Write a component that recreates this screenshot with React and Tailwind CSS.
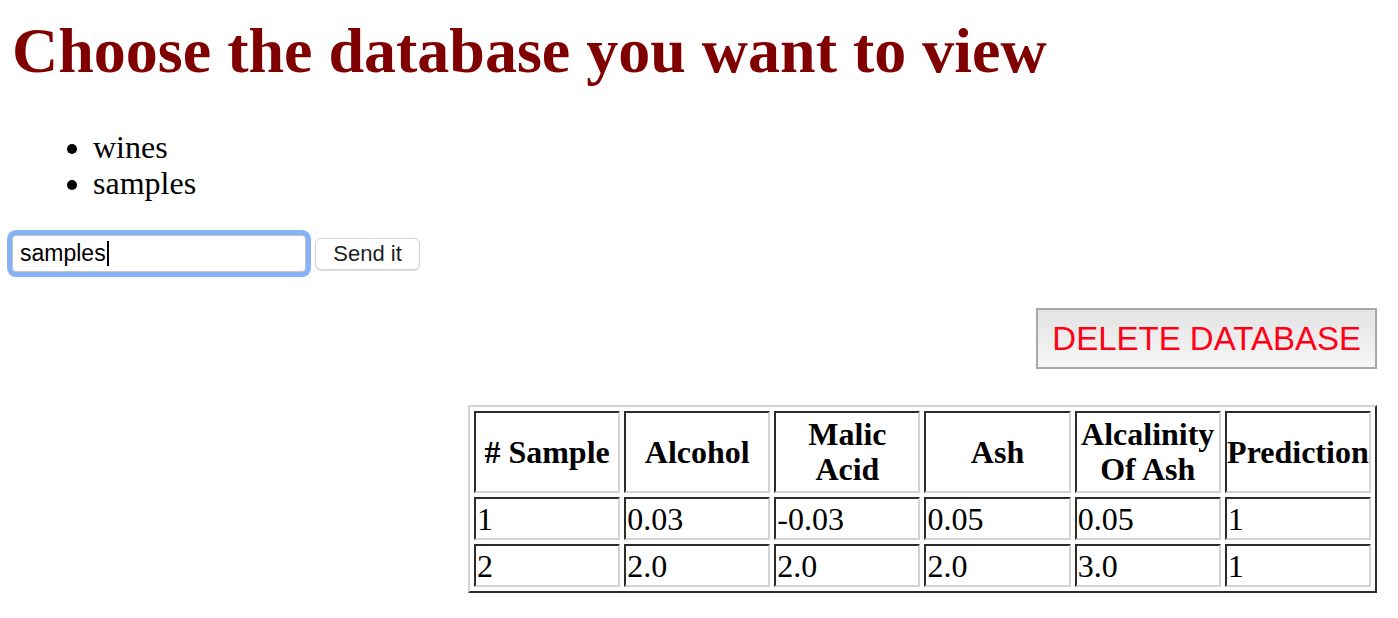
import React from "react";

const columns = ["# Sample", "Alcohol", "Malic Acid", "Ash", "Alcalinity Of Ash", "Prediction"];

const rows = [
  ["1", "0.03", "-0.03", "0.05", "0.05", "1"],
  ["2", "2.0", "2.0", "2.0", "3.0", "1"],
];

const cellBorder =
  "border-2 border-t-[#2c2c2c] border-l-[#2c2c2c] border-r-[#d3d3d3] border-b-[#d3d3d3]";

function DataTable() {
  return (
    <table className="table-fixed border-separate border-spacing-[4px] w-[909px] border-2 border-t-[#d3d3d3] border-l-[#d3d3d3] border-r-[#2c2c2c] border-b-[#2c2c2c]">
      <thead>
        <tr>
          {columns.map((col) => (
            <th
              key={col}
              className={`${cellBorder} w-[146px] h-[82px] px-0 py-0 text-center align-middle font-bold text-[32px] leading-[35px]`}
            >
              {col}
            </th>
          ))}
        </tr>
      </thead>
      <tbody>
        {rows.map((row, i) => (
          <tr key={i}>
            {row.map((val, j) => (
              <td
                key={j}
                className={`${cellBorder} h-[43px] px-[1px] py-0 text-left align-middle text-[32px] leading-[36px]`}
              >
                {val}
              </td>
            ))}
          </tr>
        ))}
      </tbody>
    </table>
  );
}

export default function App() {
  return (
    <div className="min-h-[618px] w-full bg-white text-black font-['Liberation_Serif','Times_New_Roman',serif] overflow-hidden">
      <h1 className="mt-[14px] pl-[12px] text-[64px] leading-[73px] font-bold text-[#800000] whitespace-nowrap">
        Choose the database you want to view
      </h1>

      <ul className="mt-[42px] pl-[93px] list-disc text-[32px] leading-[36px]">
        <li>wines</li>
        <li>samples</li>
      </ul>

      <div className="mt-[34px] pl-[12px] flex items-center">
        <div className="relative w-[294px] h-[37px] rounded-[4px] border border-[#c4c4c4] bg-white ring-[5px] ring-[#86b3f6] flex items-center pl-[7px] font-['Liberation_Sans',Arial,sans-serif] text-[23px] text-black">
          <span>samples</span>
          <span className="inline-block w-[2px] h-[25px] bg-black ml-[1px]" />
        </div>
        <button
          type="button"
          className="ml-[9px] w-[105px] h-[32px] rounded-[6px] border border-[#d4d4d4] bg-white shadow-[0_1px_1px_rgba(0,0,0,0.12)] font-['Liberation_Sans',Arial,sans-serif] text-[22px] text-[#1f1f1f] leading-none"
        >
          Send it
        </button>
      </div>

      <div className="mt-[36px] pr-[21px] flex justify-end">
        <button
          type="button"
          className="h-[61px] px-[14px] border-2 border-[#a9a9a9] bg-gradient-to-b from-[#e3e3e3] to-[#f6f6f6] font-['Liberation_Sans',Arial,sans-serif] text-[33px] leading-none text-[#ff0016]"
        >
          DELETE DATABASE
        </button>
      </div>

      <div className="mt-[36px] pr-[21px] flex justify-end">
        <DataTable />
      </div>
    </div>
  );
}
